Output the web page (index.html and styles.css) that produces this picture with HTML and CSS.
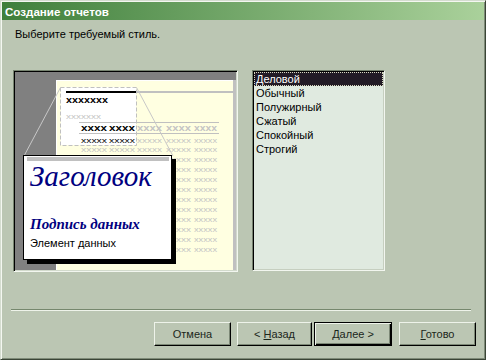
FILE: index.html
```html
<!DOCTYPE html>
<html lang="ru">

<head>
  <meta charset="UTF-8">
  <title>Создание отчетов</title>
  <link rel="stylesheet" href="styles.css">
</head>

<body>
  <div class="window">
    <div class="titlebar">Создание отчетов</div>
    <div class="content">
      <p class="prompt">Выберите требуемый стиль.</p>
      <div class="main">
        <div class="preview">
          <svg class="page" width="221" height="198" viewBox="16 73 221 198">
            <rect x="16" y="73" width="221" height="198" fill="#808080" />
            <rect x="57" y="81" width="177" height="190" fill="#ffffe1" />
            <rect x="234" y="81" width="3" height="190" fill="#c0c0c0" />
            <rect x="57" y="81" width="177" height="1" fill="#ffffff" />
            <rect x="57" y="81" width="1" height="190" fill="#ffffff" />
            <rect x="62" y="92" width="172" height="2" fill="#c0c0c0" />
            <rect x="62" y="88" width="75" height="58" fill="#ffffff" />
            <rect x="67" y="92" width="70" height="2" fill="#000000" />
            <line x1="80" y1="123.5" x2="220" y2="123.5" stroke="#c0c0c0" />
            <line x1="80" y1="134.5" x2="220" y2="134.5" stroke="#c0c0c0" />
            <rect x="61.5" y="88.5" width="76" height="58" fill="none" stroke="#c0c0c0" stroke-dasharray="4 2" />
            <line x1="61.5" y1="88.5" x2="25" y2="157" stroke="#c8c8c8" />
            <line x1="137.5" y1="88.5" x2="174" y2="157" stroke="#c8c8c8" />

            <text x="67" y="104" class="xb" textLength="42" lengthAdjust="spacingAndGlyphs">xxxxxxx</text>
            <text x="67" y="120" class="xg" textLength="35" lengthAdjust="spacingAndGlyphs">xxxxxxx</text>

            <text x="82" y="132" class="xb" textLength="26" lengthAdjust="spacingAndGlyphs">xxxx</text>
            <text x="110" y="132" class="xb" textLength="26" lengthAdjust="spacingAndGlyphs">xxxx</text>
            <text x="138" y="132" class="xgb" textLength="25" lengthAdjust="spacingAndGlyphs">xxxx</text>
            <text x="167" y="132" class="xgb" textLength="25" lengthAdjust="spacingAndGlyphs">xxxx</text>
            <text x="195" y="132" class="xgb" textLength="23" lengthAdjust="spacingAndGlyphs">xxxx</text>

            <text x="82" y="143.5" class="xn" textLength="26" lengthAdjust="spacingAndGlyphs">xxxxx</text>
            <text x="110" y="143.5" class="xn" textLength="26" lengthAdjust="spacingAndGlyphs">xxxxx</text>
            <text x="138" y="143.5" class="xg" textLength="25" lengthAdjust="spacingAndGlyphs">xxxxx</text>
            <text x="167" y="143.5" class="xg" textLength="25" lengthAdjust="spacingAndGlyphs">xxxxx</text>
            <text x="195" y="143.5" class="xg" textLength="23" lengthAdjust="spacingAndGlyphs">xxxxx</text>

            <text x="82" y="152.5" class="xg" textLength="26" lengthAdjust="spacingAndGlyphs">xxxxx</text>
            <text x="110" y="152.5" class="xg" textLength="26" lengthAdjust="spacingAndGlyphs">xxxxx</text>
            <text x="138" y="152.5" class="xg" textLength="25" lengthAdjust="spacingAndGlyphs">xxxxx</text>
            <text x="167" y="152.5" class="xg" textLength="25" lengthAdjust="spacingAndGlyphs">xxxxx</text>
            <text x="195" y="152.5" class="xg" textLength="23" lengthAdjust="spacingAndGlyphs">xxxxx</text>

            <g class="xg">
              <text x="167" y="162.5" textLength="25" lengthAdjust="spacingAndGlyphs">xxxxx</text>
              <text x="195" y="162.5" textLength="23" lengthAdjust="spacingAndGlyphs">xxxxx</text>
              <text x="167" y="172.5" textLength="25" lengthAdjust="spacingAndGlyphs">xxxxx</text>
              <text x="195" y="172.5" textLength="23" lengthAdjust="spacingAndGlyphs">xxxxx</text>
              <text x="167" y="182.5" textLength="25" lengthAdjust="spacingAndGlyphs">xxxxx</text>
              <text x="195" y="182.5" textLength="23" lengthAdjust="spacingAndGlyphs">xxxxx</text>
              <text x="167" y="192.5" textLength="25" lengthAdjust="spacingAndGlyphs">xxxxx</text>
              <text x="195" y="192.5" textLength="23" lengthAdjust="spacingAndGlyphs">xxxxx</text>
              <text x="167" y="202.5" textLength="25" lengthAdjust="spacingAndGlyphs">xxxxx</text>
              <text x="195" y="202.5" textLength="23" lengthAdjust="spacingAndGlyphs">xxxxx</text>
              <text x="167" y="212.5" textLength="25" lengthAdjust="spacingAndGlyphs">xxxxx</text>
              <text x="195" y="212.5" textLength="23" lengthAdjust="spacingAndGlyphs">xxxxx</text>
              <text x="167" y="222.5" textLength="25" lengthAdjust="spacingAndGlyphs">xxxxx</text>
              <text x="195" y="222.5" textLength="23" lengthAdjust="spacingAndGlyphs">xxxxx</text>
              <text x="167" y="232.5" textLength="25" lengthAdjust="spacingAndGlyphs">xxxxx</text>
              <text x="195" y="232.5" textLength="23" lengthAdjust="spacingAndGlyphs">xxxxx</text>
              <text x="167" y="242.5" textLength="25" lengthAdjust="spacingAndGlyphs">xxxxx</text>
              <text x="195" y="242.5" textLength="23" lengthAdjust="spacingAndGlyphs">xxxxx</text>
              <text x="167" y="252.5" textLength="25" lengthAdjust="spacingAndGlyphs">xxxxx</text>
              <text x="195" y="252.5" textLength="23" lengthAdjust="spacingAndGlyphs">xxxxx</text>
            </g>
          </svg>
          <div class="callout">
            <div class="callout-bar"></div>
            <div class="callout-title">Заголовок</div>
            <div class="callout-caption">Подпись данных</div>
            <div class="callout-item">Элемент данных</div>
          </div>
        </div>
        <ul class="style-list">
          <li class="selected">Деловой</li>
          <li>Обычный</li>
          <li>Полужирный</li>
          <li>Сжатый</li>
          <li>Спокойный</li>
          <li>Строгий</li>
        </ul>
      </div>
      <hr class="separator">
      <div class="buttons">
        <button class="btn cancel" type="button">Отмена</button>
        <button class="btn back" type="button">&lt; <u>Н</u>азад</button>
        <button class="btn next" type="button"><u>Д</u>алее &gt;</button>
        <button class="btn finish" type="button"><u>Г</u>отово</button>
      </div>
    </div>
  </div>
</body>

</html>
```

FILE: styles.css
```css
/* bg: #bbc6b3  list: #e0eae0  title: #3f7f3b -> #aad19b */
body {
  margin: 0;
  font-family: "Liberation Sans", Arial, sans-serif;
  font-size: 11px;
  color: #000;
}

.window {
  box-sizing: border-box;
  width: 486px;
  height: 360px;
  padding: 1px;
  background-color: #bbc6b3;
  border: 1px solid;
  border-color: #d4dccf #3a4536 #3a4536 #d4dccf;
  box-shadow: inset 1px 1px #f4f7f1, inset -1px -1px #7e8a78;
}

.titlebar {
  height: 18px;
  padding: 1px 0 0 3px;
  box-sizing: border-box;
  line-height: 17px;
  font-size: 11.6px;
  font-weight: bold;
  color: #fff;
  background: linear-gradient(to right, #3f7f3b, #aad19b);
}

.content {
  padding: 0 8px 0 11px;
}

.prompt {
  margin: 8px 0 0 2px;
  line-height: 13px;
}

.main {
  display: flex;
  margin-top: 29px;
}

.preview {
  position: relative;
  width: 225px;
  height: 202px;
  box-sizing: border-box;
  border: 1px solid;
  border-color: #76836f #f2f6ef #f2f6ef #76836f;
  box-shadow: inset 1px 1px #000, inset -1px -1px #d2dacc;
  padding: 1px;
}

.page {
  display: block;
}

/* sample "xxxx" placeholders of the report page */
.xb {
  font: bold 9px "Liberation Sans", sans-serif;
  fill: #000;
}

.xn {
  font: 8px "Liberation Sans", sans-serif;
  fill: #000;
}

.xg {
  font: 8px "Liberation Sans", sans-serif;
  fill: #c4c4c4;
}

.xgb {
  font: bold 9px "Liberation Sans", sans-serif;
  fill: #c4c4c4;
}

.callout {
  position: absolute;
  left: 9px;
  top: 84px;
  width: 147px;
  height: 103px;
  background: #fff;
  border: 1px solid #000;
  box-shadow: 4px 4px 0 #000;
}

.callout-bar {
  height: 4px;
  margin: 1px 2px 0 3px;
  background: #c0c0c0;
}

.callout-title {
  margin: 0 0 0 6px;
  font: italic 29px/31px "Liberation Serif", "Times New Roman", serif;
  color: #000080;
}

.callout-caption {
  margin: 23px 0 0 6px;
  font: bold italic 15px/18px "Liberation Serif", "Times New Roman", serif;
  color: #000080;
}

.callout-item {
  margin: 4px 0 0 6px;
  line-height: 13px;
}

.style-list {
  list-style: none;
  margin: 0 0 0 14px;
  padding: 1px;
  width: 133px;
  height: 201px;
  box-sizing: border-box;
  background: #e0eae0;
  border: 1px solid;
  border-color: #76836f #f2f6ef #f2f6ef #76836f;
  box-shadow: inset 1px 1px #000, inset -1px -1px #c6cfc0;
}

.style-list li {
  height: 14px;
  line-height: 14px;
  padding-left: 2px;
}

.style-list li.selected {
  background: #221b26;
  color: #fff;
  outline: 1px dotted #d8d8c0;
  outline-offset: -1px;
}

.separator {
  margin: 37px 0 0 -2px;
  width: 460px;
  height: 0;
  border: 0;
  border-top: 1px solid #76886e;
  border-bottom: 1px solid #eef3ea;
}

.buttons {
  display: flex;
  justify-content: flex-end;
  margin-top: 11px;
}

.btn {
  height: 24px;
  width: 77px;
  padding: 0;
  font: 11px "Liberation Sans", Arial, sans-serif;
  color: #1c261b;
  background: #bbc6b3;
  border: 1px solid;
  border-color: #eef3ea #000 #000 #eef3ea;
  box-shadow: inset -1px -1px #7c8876;
}

.btn u {
  text-decoration-thickness: 1px;
}

.back {
  width: 75px;
  margin-left: 6px;
}

.next {
  width: 78px;
  margin-left: 2px;
  border-color: #000;
  box-shadow: inset 1px 1px #eef3ea, inset -1px -1px #000, inset -2px -2px #7c8876;
}

.finish {
  margin-left: 7px;
}
```
